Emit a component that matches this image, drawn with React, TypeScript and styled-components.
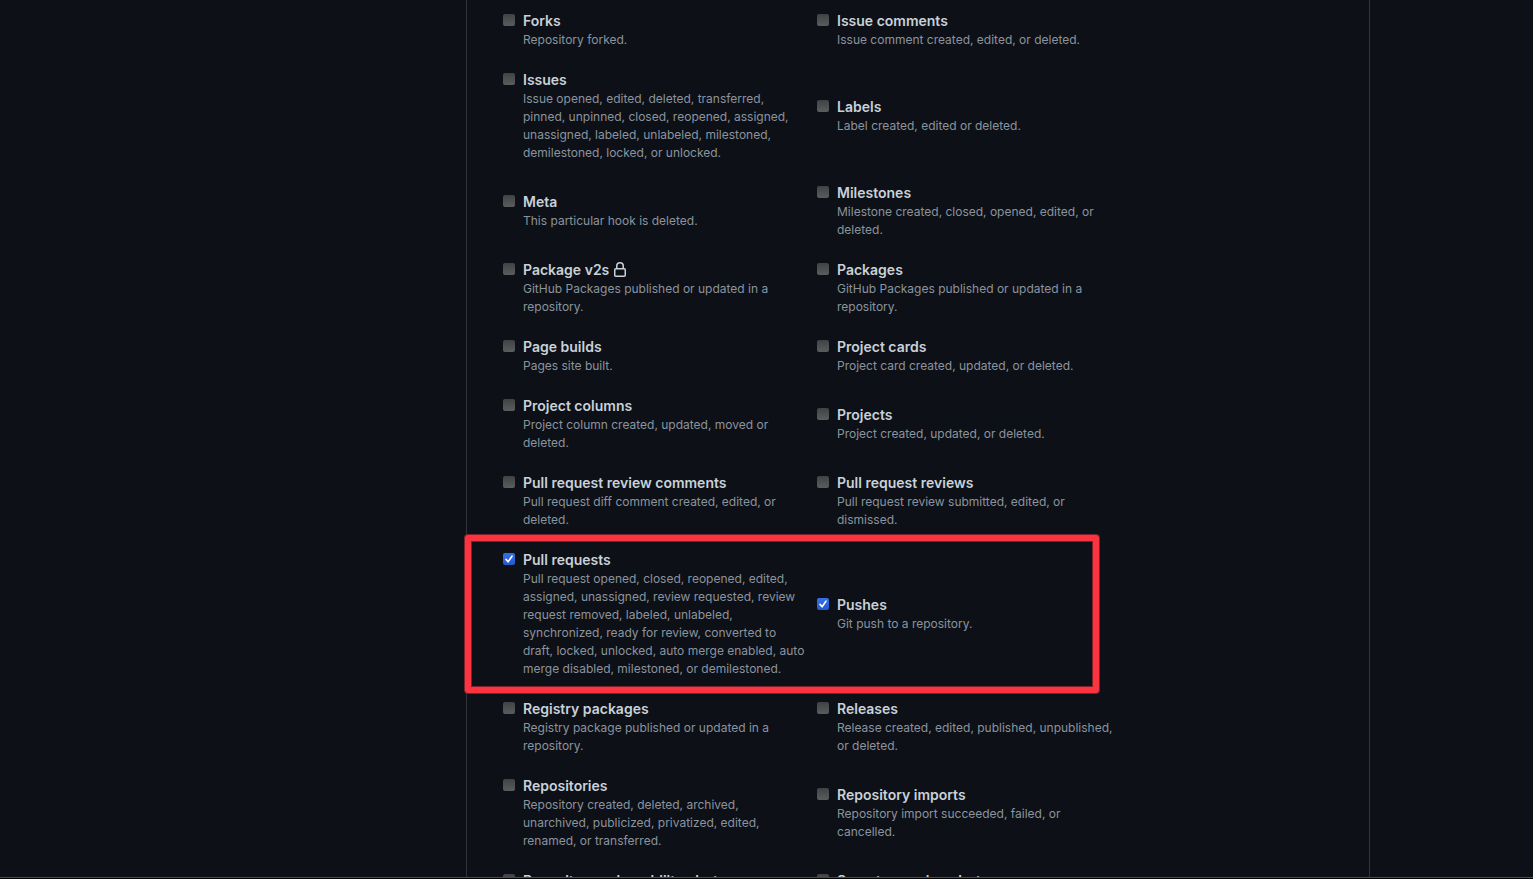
import React, { useId } from "react";
import styled, { createGlobalStyle } from "styled-components";

const GlobalStyle = createGlobalStyle`
  *, *::before, *::after { box-sizing: border-box; }
  body {
    margin: 0;
    background: #0d1017;
    color: #c9d1d9;
    font-family: Inter, "Liberation Sans", sans-serif;
    font-size: 14px;
    line-height: 21px;
  }
`;

const Page = styled.div`
  display: flex;
  flex-direction: column;
  height: 100vh;
  overflow: hidden;
  border-bottom: 1px solid #000;
`;

const Viewport = styled.div`
  display: flex;
  flex: 1;
  min-height: 0;
  overflow: hidden;
  padding: 0 163px 0 466px;
  border-bottom: 1px solid #4a4b50;
`;

const Panel = styled.main`
  flex: 1;
  min-width: 660px;
  padding-left: 36px;
  border: solid #30343b;
  border-width: 0 1px;
`;

const EventRow = styled.div`
  position: relative;
  display: grid;
  grid-template-columns: 304px 304px;
  column-gap: 10px;
  align-items: center;
`;

const Highlight = styled.div`
  position: absolute;
  inset: -4px auto -5px -38px;
  width: 634px;
  border: 6px solid #fb3440;
  border-radius: 3px;
  box-shadow: 0 0 0 1px #7f212b, inset 0 0 0 1px #7f212b;
  pointer-events: none;
`;

const EventItem = styled.div`
  display: grid;
  grid-template-columns: 12px 1fr;
  column-gap: 8px;
  padding: 10px 0;
`;

const CheckSlot = styled.span`
  position: relative;
  display: block;
  width: 12px;
  height: 12px;
  margin-top: 4px;
`;

const Checkbox = styled.input`
  appearance: none;
  display: block;
  width: 12px;
  height: 12px;
  margin: 0;
  border-radius: 2px;
  background: linear-gradient(#414244, #5b5c5e);

  &:checked {
    background: linear-gradient(#3570e8, #2459cf);
  }

  & + svg {
    display: none;
  }

  &:checked + svg {
    display: block;
  }
`;

const CheckMark = styled.svg`
  position: absolute;
  inset: 0;
  pointer-events: none;
`;

const Title = styled.label`
  display: flex;
  align-items: center;
  gap: 3px;
  font-weight: 600;
  line-height: 21px;
`;

const Description = styled.p`
  margin: 0;
  font-size: 12px;
  line-height: 18px;
  color: #8b949e;
`;

function LockIcon() {
  return (
    <svg width="16" height="16" viewBox="0 0 16 16" fill="currentColor" aria-hidden="true">
      <path
        fillRule="evenodd"
        d="M4 4v2h-.25A1.75 1.75 0 002 7.75v5.5c0 .966.784 1.75 1.75 1.75h8.5A1.75 1.75 0 0014 13.25v-5.5A1.75 1.75 0 0012.25 6H12V4a4 4 0 10-8 0zm6.5 2V4a2.5 2.5 0 10-5 0v2h5zM12 7.5h.25a.25.25 0 01.25.25v5.5a.25.25 0 01-.25.25h-8.5a.25.25 0 01-.25-.25v-5.5a.25.25 0 01.25-.25H12z"
      />
    </svg>
  );
}

interface HookEvent {
  title: string;
  text: string;
  checked?: boolean;
  locked?: boolean;
}

function EventOption({ title, text, checked, locked }: HookEvent) {
  const id = useId();
  return (
    <EventItem>
      <CheckSlot>
        <Checkbox type="checkbox" id={id} defaultChecked={checked} aria-describedby={`${id}-text`} />
        <CheckMark width="12" height="12" viewBox="0 0 12 12" fill="none" aria-hidden="true">
          <path d="M3 6.4 5.1 8.8 9 3.2" stroke="#fff" strokeWidth="1.6" strokeLinecap="round" strokeLinejoin="round" />
        </CheckMark>
      </CheckSlot>
      <div>
        <Title htmlFor={id}>
          {title}
          {locked && <LockIcon />}
        </Title>
        <Description id={`${id}-text`}>{text}</Description>
      </div>
    </EventItem>
  );
}

const rows: { events: [HookEvent, HookEvent]; highlighted?: boolean }[] = [
  {
    events: [
      { title: "Forks", text: "Repository forked." },
      { title: "Issue comments", text: "Issue comment created, edited, or deleted." },
    ],
  },
  {
    events: [
      {
        title: "Issues",
        text: "Issue opened, edited, deleted, transferred, pinned, unpinned, closed, reopened, assigned, unassigned, labeled, unlabeled, milestoned, demilestoned, locked, or unlocked.",
      },
      { title: "Labels", text: "Label created, edited or deleted." },
    ],
  },
  {
    events: [
      { title: "Meta", text: "This particular hook is deleted." },
      { title: "Milestones", text: "Milestone created, closed, opened, edited, or deleted." },
    ],
  },
  {
    events: [
      { title: "Package v2s", text: "GitHub Packages published or updated in a repository.", locked: true },
      { title: "Packages", text: "GitHub Packages published or updated in a repository." },
    ],
  },
  {
    events: [
      { title: "Page builds", text: "Pages site built." },
      { title: "Project cards", text: "Project card created, updated, or deleted." },
    ],
  },
  {
    events: [
      { title: "Project columns", text: "Project column created, updated, moved or deleted." },
      { title: "Projects", text: "Project created, updated, or deleted." },
    ],
  },
  {
    events: [
      { title: "Pull request review comments", text: "Pull request diff comment created, edited, or deleted." },
      { title: "Pull request reviews", text: "Pull request review submitted, edited, or dismissed." },
    ],
  },
  {
    highlighted: true,
    events: [
      {
        title: "Pull requests",
        text: "Pull request opened, closed, reopened, edited, assigned, unassigned, review requested, review request removed, labeled, unlabeled, synchronized, ready for review, converted to draft, locked, unlocked, auto merge enabled, auto merge disabled, milestoned, or demilestoned.",
        checked: true,
      },
      { title: "Pushes", text: "Git push to a repository.", checked: true },
    ],
  },
  {
    events: [
      { title: "Registry packages", text: "Registry package published or updated in a repository." },
      { title: "Releases", text: "Release created, edited, published, unpublished, or deleted." },
    ],
  },
  {
    events: [
      {
        title: "Repositories",
        text: "Repository created, deleted, archived, unarchived, publicized, privatized, edited, renamed, or transferred.",
      },
      { title: "Repository imports", text: "Repository import succeeded, failed, or cancelled." },
    ],
  },
  {
    events: [
      {
        title: "Repository vulnerability alerts",
        text: "Security alert created, resolved, or dismissed on a repository.",
      },
      {
        title: "Secret scanning alerts",
        text: "Secrets scanning alert created, resolved, or reopened.",
      },
    ],
  },
];

export default function App() {
  return (
    <>
      <GlobalStyle />
      <Page>
        <Viewport>
          <Panel>
            {rows.map(({ events, highlighted }) => (
              <EventRow key={events[0].title}>
                <EventOption {...events[0]} />
                <EventOption {...events[1]} />
                {highlighted && <Highlight />}
              </EventRow>
            ))}
          </Panel>
        </Viewport>
      </Page>
    </>
  );
}
